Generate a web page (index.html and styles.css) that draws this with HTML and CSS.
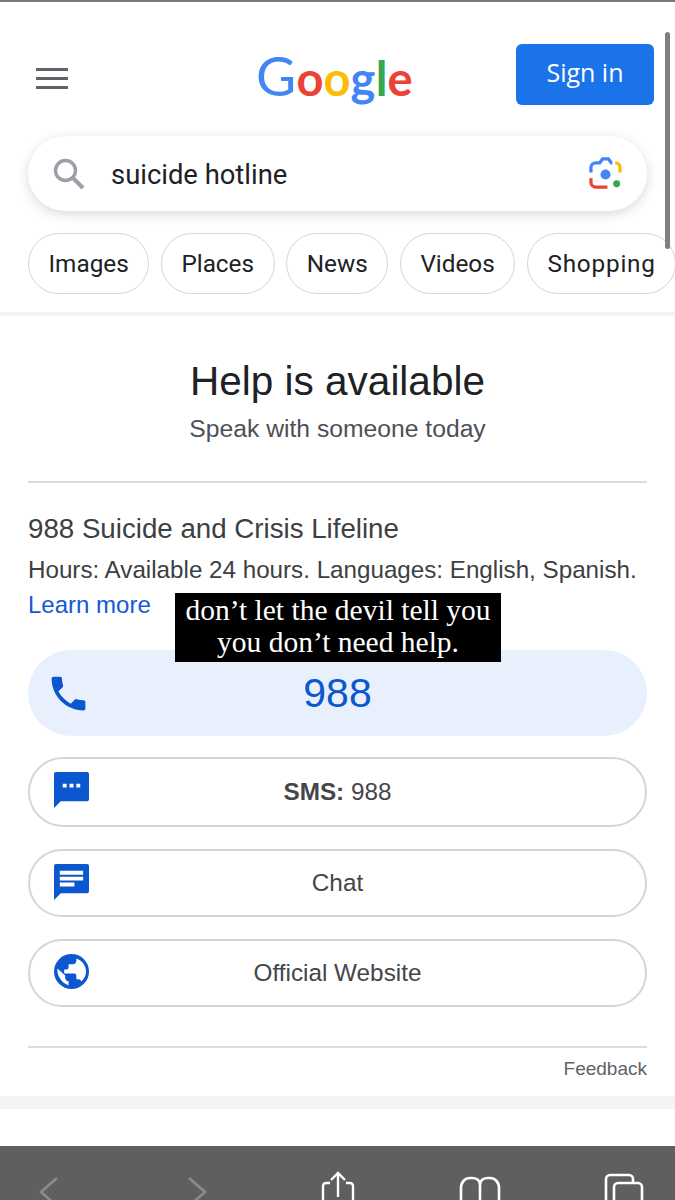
FILE: index.html
```html
<!DOCTYPE html><html lang='en'>
	<head>
		<meta charset='utf-8'>
		<title>suicide hotline - Google Search</title>
		<link rel="stylesheet" href="styles.css">
	</head>
	<body>
		<div class='page'>
			<!-- top bar -->
			<header class='topBar'>
				<div class='burger'><i></i><i></i><i></i></div>
				<div class='logo'><span class='gBlue gCap'>G</span><span class='gRed'>o</span><span class='gYellow'>o</span><span class='gBlue'>g</span><span class='gGreen'>l</span><span class='gRed'>e</span></div>
				<a class='signIn'>Sign in</a>
			</header>
			<!-- search -->
			<div class='searchBox'>
				<svg class='searchIcon' viewBox='0 0 32 32' width='32' height='32'><circle cx='12.5' cy='12.5' r='10' fill='none' stroke='#9aa0a6' stroke-width='3.4'/><path d='M20 20l10 10' stroke='#9aa0a6' stroke-width='4' fill='none'/></svg>
				<span class='query'>suicide hotline</span>
				<svg class='lens' viewBox='0 0 34 34' width='33' height='33'>
					<path d='M2 16v-5a5 5 0 0 1 5-5h4l3-4h6l3 4h1' fill='none' stroke='#4285f4' stroke-width='3.4'/>
					<path d='M27 6a5 5 0 0 1 5 5v5' fill='none' stroke='#fbbc04' stroke-width='3.4'/>
					<path d='M2 22v4a5 5 0 0 0 5 5h12' fill='none' stroke='#ea4335' stroke-width='3.4'/>
					<circle cx='17' cy='18' r='5.2' fill='#4285f4'/>
					<circle cx='28.5' cy='27.5' r='3.6' fill='#34a853'/>
				</svg>
			</div>
			<!-- chips -->
			<nav class='chips'>
				<a class='chip'>Images</a>
				<a class='chip'>Places</a>
				<a class='chip'>News</a>
				<a class='chip'>Videos</a>
				<a class='chip chipLast'>Shopping</a>
			</nav>
			<!-- help card -->
			<section class='card'>
				<h1 class='helpTitle'>Help is available</h1>
				<p class='helpSub'>Speak with someone today</p>
				<div class='rule'></div>
				<h2 class='lineName'>988 Suicide and Crisis Lifeline</h2>
				<p class='lineInfo'>Hours: Available 24 hours. Languages: English, Spanish.</p>
				<a class='learn'>Learn more</a>
				<a class='callBtn'>
					<svg class='rowIcon' viewBox='0 0 24 24' width='45' height='45'><path fill='#0b57d0' d='M6.6 10.8c1.4 2.8 3.8 5.1 6.6 6.6l2.2-2.2c.3-.3.7-.4 1-.2 1.100.4 2.300.6 3.600.6.600 0 1 .4 1 1V20c0 .6-.4 1-1 1C10.600 21 3 13.400 3 4c0-.6.400-1 1-1h3.500c.6 0 1 .4 1 1 0 1.300.2 2.500.6 3.600.1.300 0 .7-.2 1z'/></svg>
					<span>988</span>
				</a>
				<a class='rowBtn rowSms'>
					<svg class='rowIcon' viewBox='0 0 36 37' width='35' height='36'><path fill='#0b57d0' d='M2 0h32a2 2 0 0 1 2 2v26a2 2 0 0 1-2 2H7l-7 7V2a2 2 0 0 1 2-2z'/><path fill='#fff' d='M9 12h4v4H9zM16 12h4v4h-4zM23 12h4v4h-4z'/></svg>
					<span><b>SMS:</b> 988</span>
				</a>
				<a class='rowBtn rowChat'>
					<svg class='rowIcon' viewBox='0 0 36 37' width='35' height='36'><path fill='#0b57d0' d='M2 0h32a2 2 0 0 1 2 2v26a2 2 0 0 1-2 2H7l-7 7V2a2 2 0 0 1 2-2z'/><path fill='#fff' d='M6 7h24v4H6zM6 13h24v4H6zM6 19h15v4H6z'/></svg>
					<span>Chat</span>
				</a>
				<a class='rowBtn rowWeb'>
					<svg class='rowIcon' viewBox='0 0 36 36' width='35' height='35'><circle cx='18' cy='18' r='18' fill='#0b57d0'/><path fill='#fff' d='M3.500 15c-.6 7 3.500 14 11.500 17.500V28c-2 0-3.500-1.500-3.500-3.500V22zM23 4.500V7c0 2-1.500 3.500-3.500 3.500H15V14c0 1-.8 2-2 2h-2.500v4H21c1 0 2 1 2 2v4h2c1.500 0 2.800 1 3.300 2.300C31 25.500 33 22 33 18c0-6-4-11.500-10-13.500z'/></svg>
					<span>Official Website</span>
				</a>
				<div class='rule ruleBottom'></div>
				<div class='feedback'>Feedback</div>
			</section>
			<div class='band'></div>
		</div>
		<!-- story caption lying over the page -->
		<div class='caption'>don’t let the devil tell you<br>you don’t need help.</div>
		<div class='scrollThumb'></div>
		<!-- browser toolbar -->
		<footer class='toolbar'>
			<svg class='tbBack' viewBox='0 0 20 40' width='20' height='40'><path d='M18 2L2 16l16 14' fill='none' stroke='#8c8c8c' stroke-width='2.600'/></svg>
			<svg class='tbNext' viewBox='0 0 20 40' width='20' height='40'><path d='M2 2l16 14L2 30' fill='none' stroke='#8c8c8c' stroke-width='2.600'/></svg>
			<svg class='tbShare' viewBox='0 0 34 48' width='34' height='48'><path d='M17 26V2M10 9l7-7 7 7M9 12H5a3 3 0 0 0-3 3v24a3 3 0 0 0 3 3h24a3 3 0 0 0 3-3V15a3 3 0 0 0-3-3h-4' fill='none' stroke='#fff' stroke-width='2.400'/></svg>
			<svg class='tbBook' viewBox='0 0 42 40' width='42' height='40'><path d='M2 40V12C2 6 6 2 11 2h2c4 0 8 2 8 7 0-5 4-7 8-7h2c5 0 9 4 9 10v28M21 9v31' fill='none' stroke='#fff' stroke-width='2.600'/></svg>
			<svg class='tbTabs' viewBox='0 0 40 40' width='40' height='40'><path d='M2 30V6a4 4 0 0 1 4-4h19a4 4 0 0 1 4 4v3' fill='none' stroke='#fff' stroke-width='2.600'/><rect x='10' y='10' width='28' height='34' rx='4' fill='none' stroke='#fff' stroke-width='2.600'/></svg>
		</footer>
	</body>
</html>
```
FILE: styles.css
```css
html,body{
	margin:0;
	height:1200px;
	overflow:hidden;
	background:#fff;
}
body{
	position:relative;
	font-family:"Liberation Sans",Arial,sans-serif;
	color:#202124;
}
a{
	text-decoration:none;
}
.page{
	border-top:2px solid #7a7a7a;
}
/* top bar */
.topBar{
	display:flex;
	align-items:center;
	height:61px;
	margin-top:42px;
	padding:0 21px 0 36px;
}
.burger{
	display:flex;
	flex-direction:column;
	gap:6px;
	width:32px;
	margin-top:8px;
}
.burger i{
	display:block;
	height:3px;
	background:#5f6368;
}
.logo{
	font-family:Lato,sans-serif;
	font-size:47px;
	font-weight:700;
	line-height:61px;
	letter-spacing:.2px;
	margin:0 auto 0 188px;
	padding-top:4px;
}
.gCap{font-size:55px;font-weight:400;}
.gBlue{color:#4285f4;}
.gRed{color:#ea4335;}
.gYellow{color:#fbbc05;}
.gGreen{color:#34a853;}
.signIn{
	display:flex;
	align-items:center;
	justify-content:center;
	width:138px;
	height:61px;
	background:#1a73e8;
	border-radius:6px;
	color:#fff;
	font-family:"Open Sans",sans-serif;
	font-size:25px;
	padding-bottom:5px;
	box-sizing:border-box;
}
/* search */
.searchBox{
	display:flex;
	align-items:center;
	height:75px;
	margin:31px 28px 0;
	padding:0 25px 0 25px;
	border-radius:38px;
	background:#fff;
	box-shadow:0 3px 12px rgba(60,64,67,.2);
}
.query{
	flex:1;
	margin-left:26px;
	font-family:Roboto,sans-serif;
	font-size:27.400px;
	padding-top:2px;
}
/* chips */
.chips{
	display:flex;
	gap:11.700px;
	margin-top:22px;
	padding:0 0 18px 28px;
	white-space:nowrap;
	border-bottom:4px solid #f1f3f4;
}
.chip{
	flex:none;
	display:flex;
	align-items:center;
	height:61px;
	box-sizing:border-box;
	padding:0 19.500px;
	border:1.500px solid #d4d5d7;
	border-radius:31px;
	font-family:Roboto,sans-serif;
	font-size:24.300px;
	color:#202124;
}
.chipLast{
	letter-spacing:.8px;
}
/* help card */
.card{
	padding:0 28px;
}
.helpTitle{
	margin:0;
	padding-top:40px;
	font-size:40.500px;
	line-height:50px;
	font-weight:400;
	text-align:center;
}
.helpSub{
	margin:8px 0 0;
	font-size:24.700px;
	line-height:30px;
	text-align:center;
	color:#4d5156;
}
.rule{
	height:2px;
	background:#dadce0;
	margin-top:37px;
}
.lineName{
	margin:29px 0 0;
	font-size:27.700px;
	line-height:34px;
	font-weight:400;
	color:#3c4043;
}
.lineInfo{
	margin:8px 0 0;
	font-size:24.200px;
	line-height:32px;
	color:#3c4043;
	white-space:nowrap;
}
.learn{
	display:block;
	margin-top:3px;
	font-size:24px;
	line-height:32px;
	color:#1558d6;
}
.callBtn{
	position:relative;
	display:flex;
	align-items:center;
	justify-content:center;
	height:86px;
	margin-top:29px;
	border-radius:43px;
	background:#e8f0fe;
	font-size:41px;
	color:#0b57d0;
}
.rowIcon{
	position:absolute;
	left:18px;
	top:21px;
}
.rowBtn{
	position:relative;
	display:flex;
	align-items:center;
	justify-content:center;
	box-sizing:border-box;
	border:2px solid #d6d6d6;
	border-radius:36px;
	font-size:24.300px;
	color:#444649;
}
.rowSms{
	height:70px;
	margin-top:21px;
}
.rowChat{
	height:68px;
	margin-top:22px;
}
.rowWeb{
	height:68px;
	margin-top:22px;
}
.rowBtn .rowIcon{
	left:24px;
	top:13px;
}
.ruleBottom{
	margin-top:39px;
}
.feedback{
	margin-top:10px;
	text-align:right;
	font-size:19px;
	line-height:22px;
	color:#5f6368;
}
.band{
	height:13px;
	margin-top:16px;
	background:#f1f3f4;
}
/* overlays */
.caption{
	position:absolute;
	left:175px;
	top:593px;
	width:326px;
	height:69px;
	background:#000;
	color:#fff;
	font-family:"Liberation Serif",serif;
	font-size:29.500px;
	line-height:32px;
	text-align:center;
	padding-top:1px;
	box-sizing:border-box;
}
.scrollThumb{
	position:absolute;
	left:665px;
	top:32px;
	width:5px;
	height:217px;
	border-radius:3px;
	background:#808080;
}
.toolbar{
	position:absolute;
	left:0;
	right:0;
	top:1146px;
	height:54px;
	overflow:hidden;
	background:#5f5f5f;
	display:flex;
	align-items:flex-start;
}
.tbBack{margin:30px 0 0 39px;}
.tbNext{margin:30px 0 0 128px;}
.tbShare{margin:25px 0 0 114px;}
.tbBook{margin:30px 0 0 104px;}
.tbTabs{margin:27px 0 0 103px;}
```
